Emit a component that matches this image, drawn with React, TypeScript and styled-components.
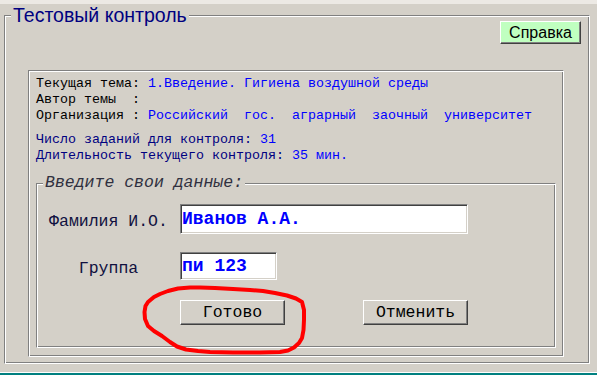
import React from "react";
import styled, { createGlobalStyle, css } from "styled-components";

const GlobalStyle = createGlobalStyle`
  html, body { margin: 0; padding: 0; }
  body {
    background: #d4d0c8;
    font-family: "Liberation Mono", "Courier New", monospace;
  }
  * { box-sizing: border-box; }
`;

const etched = css`
  border: 1px solid;
  border-color: #808080 #ffffff #ffffff #808080;
  box-shadow: inset 1px 1px 0 #ffffff, inset -1px -1px 0 #808080;
`;

const raised = css`
  border: 1px solid;
  border-color: #ffffff #404040 #404040 #ffffff;
  box-shadow: inset -1px -1px 0 #808080;
`;

const Page = styled.div`
  position: relative;
  width: 597px;
  height: 375px;
  display: flex;
  flex-direction: column;
  overflow: hidden;
`;

const TopStrip = styled.div`
  flex: none;
  height: 4px;
  background: #ece9e4;
`;

const MainGroup = styled.fieldset`
  ${etched};
  flex: 1;
  min-height: 0;
  min-inline-size: 0;
  margin: 5px 7px 8px 4px;
  padding: 0;
  display: flex;
  flex-direction: column;
`;

const MainLegend = styled.legend`
  margin-left: 6px;
  padding: 0 2px;
  font-family: "Liberation Sans", Arial, sans-serif;
  font-size: 19.5px;
  line-height: 12px;
  color: #000080;
  background: #d4d0c8;
`;

const OuterBody = styled.div`
  flex: 1;
  display: flex;
  flex-direction: column;
  padding: 0 8px 6px 23px;
`;

const HelpRow = styled.div`
  display: flex;
  justify-content: flex-end;
  margin-bottom: 26px;
`;

const HelpButton = styled.button`
  ${raised};
  width: 81px;
  height: 23px;
  padding: 0;
  background: #c0ffc0;
  font-family: "Liberation Sans", Arial, sans-serif;
  font-size: 16px;
  color: #000;
`;

const InfoBox = styled.div`
  ${etched};
  flex: 1;
  margin-right: 17px;
  padding: 5px 7px 8px 7px;
  display: flex;
  flex-direction: column;
`;

const InfoGroup = styled.div<{ $gap?: number }>`
  font-size: 13.33px;
  line-height: 16px;
  white-space: pre;
  margin-bottom: ${(p) => p.$gap ?? 0}px;
`;

const InfoLine = styled.div``;

const Caption = styled.span<{ $tone: "black" | "navy" }>`
  color: ${(p) => (p.$tone === "navy" ? "#000080" : "#000000")};
`;

const Value = styled.span`
  color: #0000ff;
`;

const DataGroup = styled.fieldset`
  ${etched};
  flex: 1;
  min-inline-size: 0;
  margin: 13px 0 0 0;
  padding: 0;
`;

const DataLegend = styled.legend`
  margin-left: 6px;
  padding: 0 2px;
  font-size: 16.5px;
  font-style: italic;
  line-height: 12px;
  color: #303040;
  background: #d4d0c8;
`;

const FormGrid = styled.div`
  display: grid;
  grid-template-columns: 143px 288px;
  row-gap: 18px;
  padding-top: 15px;
`;

const FieldLabel = styled.label`
  align-self: center;
  text-align: center;
  padding-top: 4px;
  font-size: 16.5px;
  color: #101040;
`;

const TextField = styled.input<{ $w: number; $h: number }>`
  width: ${(p) => p.$w}px;
  height: ${(p) => p.$h}px;
  margin: 0;
  padding: 0 0 0 1px;
  border: 1px solid;
  border-color: #808080 #ffffff #ffffff #808080;
  box-shadow: inset 1px 1px 0 #404040, inset -1px -1px 0 #d4d0c8;
  background: #ffffff;
  outline: none;
  font-family: "Liberation Mono", "Courier New", monospace;
  font-weight: bold;
  font-size: 18px;
  color: #0000ff;
`;

const ButtonRow = styled.div`
  grid-column: 2;
  display: flex;
  justify-content: space-between;
  margin-top: 2px;
`;

const FormButton = styled.button`
  ${raised};
  width: 105px;
  height: 25px;
  padding: 0;
  background: #d4d0c8;
  font-family: "Liberation Mono", "Courier New", monospace;
  font-size: 16.5px;
  color: #000;
`;

const Footer = styled.div`
  flex: none;
  height: 3px;
  border-top: 1px solid #ffffff;
  background: #008080;
`;

const Annotation = styled.svg`
  position: absolute;
  left: 0;
  top: 0;
  pointer-events: none;
`;

const loop: [number, number][] = [
  [148, 302], [154, 297], [160, 294], [168, 291], [178, 288.5], [190, 287.5],
  [200, 287.5], [215, 288], [233, 289], [250, 290], [263, 291], [275, 293],
  [287, 295.5], [296, 298.5], [302, 302], [304, 310], [304, 320], [303.5, 330],
  [302, 338], [299, 343], [294, 347.5], [288, 350.5], [280, 352], [260, 352.5],
  [233, 352.5], [210, 352], [198, 351], [186, 349.5], [177, 346.5], [170, 342],
  [162, 336], [154, 331], [148, 326], [145, 319], [144.5, 312], [145.5, 306],
  [148, 302],
];

export default function App() {
  return (
    <>
      <GlobalStyle />
      <Page>
        <TopStrip />
        <MainGroup>
          <MainLegend>Тестовый контроль</MainLegend>
          <OuterBody>
            <HelpRow>
              <HelpButton type="button">Справка</HelpButton>
            </HelpRow>
            <InfoBox>
              <InfoGroup $gap={8}>
                <InfoLine>
                  <Caption $tone="black">Текущая тема: </Caption>
                  <Value>1.Введение. Гигиена воздушной среды</Value>
                </InfoLine>
                <InfoLine>
                  <Caption $tone="black">Автор темы  :</Caption>
                </InfoLine>
                <InfoLine>
                  <Caption $tone="black">Организация : </Caption>
                  <Value>Российский  гос.  аграрный  заочный  университет</Value>
                </InfoLine>
              </InfoGroup>
              <InfoGroup>
                <InfoLine>
                  <Caption $tone="navy">Число заданий для контроля: </Caption>
                  <Value>31</Value>
                </InfoLine>
                <InfoLine>
                  <Caption $tone="navy">Длительность текущего контроля: </Caption>
                  <Value>35 мин.</Value>
                </InfoLine>
              </InfoGroup>
              <DataGroup>
                <DataLegend>Введите свои данные:</DataLegend>
                <FormGrid>
                  <FieldLabel htmlFor="fio">Фамилия И.О.</FieldLabel>
                  <TextField id="fio" $w={288} $h={30} defaultValue="Иванов А.А." readOnly />
                  <FieldLabel htmlFor="grp">Группа</FieldLabel>
                  <TextField id="grp" $w={97} $h={28} defaultValue="пи 123" readOnly />
                  <ButtonRow>
                    <FormButton type="button">Готово</FormButton>
                    <FormButton type="button">Отменить</FormButton>
                  </ButtonRow>
                </FormGrid>
              </DataGroup>
            </InfoBox>
          </OuterBody>
        </MainGroup>
        <Footer />
        <Annotation width={597} height={375} viewBox="0 0 597 375">
          <polyline
            points={loop.map(([x, y]) => `${x},${y}`).join(" ")}
            fill="none"
            stroke="#ff0000"
            strokeWidth={4}
            strokeLinejoin="round"
            strokeLinecap="round"
          />
        </Annotation>
      </Page>
    </>
  );
}
